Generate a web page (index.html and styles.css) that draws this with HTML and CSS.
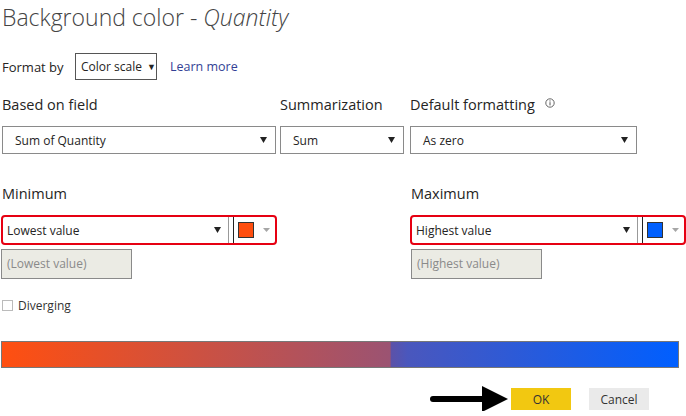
FILE: index.html
```html
<!DOCTYPE html>
<html lang="en">
  <head>
    <meta charset="UTF-8" />
    <title>Background color - Quantity</title>
    <link rel="stylesheet" href="styles.css">
  </head>
  <body>
    <h1 class="title">Background color - <em>Quantity</em></h1>

    <div class="format-row">
      <span class="format-label">Format by</span>
      <span class="mini-select">Color scale <span class="caret">&#9660;</span></span>
      <a href="#" class="learn-more">Learn more</a>
    </div>

    <div class="fields">
      <div class="field col-a">
        <div class="label">Based on field</div>
        <div class="select">
          <span>Sum of Quantity</span>
          <svg class="arrow" width="7" height="6" viewBox="0 0 7 6"><path d="M0 0h7L3.5 6z" fill="#222"/></svg>
        </div>
      </div>
      <div class="field col-b">
        <div class="label">Summarization</div>
        <div class="select">
          <span>Sum</span>
          <svg class="arrow" width="7" height="6" viewBox="0 0 7 6"><path d="M0 0h7L3.5 6z" fill="#222"/></svg>
        </div>
      </div>
      <div class="field col-c">
        <div class="label">Default formatting
          <svg class="info" width="10" height="10" viewBox="0 0 10 10">
            <circle cx="5" cy="5" r="4.2" fill="none" stroke="#555" stroke-width="0.9"/>
            <path d="M5 4.2v3.2" stroke="#555" stroke-width="1"/>
            <circle cx="5" cy="2.9" r="0.6" fill="#555"/>
          </svg>
        </div>
        <div class="select">
          <span>As zero</span>
          <svg class="arrow" width="7" height="6" viewBox="0 0 7 6"><path d="M0 0h7L3.5 6z" fill="#222"/></svg>
        </div>
      </div>
    </div>

    <div class="range">
      <div class="range-col min-col">
        <div class="label">Minimum</div>
        <div class="picker">
          <div class="picker-select">
            <span>Lowest value</span>
            <svg class="arrow" width="7" height="6" viewBox="0 0 7 6"><path d="M0 0h7L3.5 6z" fill="#222"/></svg>
          </div>
          <div class="picker-color">
            <span class="swatch swatch-min"></span>
            <svg width="7" height="4" viewBox="0 0 7 4"><path d="M0 0h7L3.5 4z" fill="#a6a6a6"/></svg>
          </div>
        </div>
        <div class="value-box">(Lowest value)</div>
      </div>
      <div class="range-col max-col">
        <div class="label">Maximum</div>
        <div class="picker">
          <div class="picker-select">
            <span>Highest value</span>
            <svg class="arrow" width="7" height="6" viewBox="0 0 7 6"><path d="M0 0h7L3.5 6z" fill="#222"/></svg>
          </div>
          <div class="picker-color">
            <span class="swatch swatch-max"></span>
            <svg width="7" height="4" viewBox="0 0 7 4"><path d="M0 0h7L3.5 4z" fill="#a6a6a6"/></svg>
          </div>
        </div>
        <div class="value-box">(Highest value)</div>
      </div>
    </div>

    <label class="diverging"><span class="checkbox"></span>Diverging</label>

    <div class="scale-bar"></div>

    <div class="actions">
      <svg class="pointer" width="82" height="26" viewBox="0 0 82 26">
        <path d="M5 13H58" stroke="#000" stroke-width="6" stroke-linecap="round"/>
        <path d="M54 0L80 13L54 26z" fill="#000"/>
      </svg>
      <button class="btn btn-ok">OK</button>
      <button class="btn btn-cancel">Cancel</button>
    </div>
  </body>
</html>
```

FILE: styles.css
```css
body {
  margin: 0;
  width: 686px;
  font-family: "Open Sans", "Noto Sans", sans-serif;
  color: #252423;
  background: #fff;
}
.title {
  margin: 0;
  padding: 2px 0 0 2px;
  height: 36px;
  font-size: 23px;
  font-weight: 300;
  line-height: 30px;
  color: #444;
}
.title em {
  font-style: italic;
}
.format-row {
  display: flex;
  align-items: center;
  height: 27px;
  margin-top: 15px;
  padding-left: 2px;
  font-size: 13px;
}
.format-label {
  width: 73px;
}
.mini-select {
  display: flex;
  align-items: center;
  box-sizing: border-box;
  width: 82px;
  height: 27px;
  padding-left: 5px;
  border: 1px solid #555;
  font-size: 12px;
}
.caret {
  font-size: 9px;
  margin-left: 5px;
}
.learn-more {
  margin-left: 13px;
  color: #333f95;
  text-decoration: none;
  font-size: 12.5px;
}
.label {
  font-size: 14.5px;
  height: 22px;
  line-height: 22px;
  white-space: nowrap;
}
.fields {
  display: flex;
  margin-top: 14px;
}
.col-a {
  width: 278px;
  padding-left: 2px;
}
.col-b {
  width: 130px;
}
.col-c {
  width: 227px;
}
.field .select {
  margin-top: 10px;
}
.col-a .select {
  width: 274px;
}
.col-b .select {
  width: 124px;
}
.col-c .select {
  width: 227px;
}
.select {
  display: flex;
  align-items: center;
  justify-content: space-between;
  box-sizing: border-box;
  height: 28px;
  padding: 0 8px 0 12px;
  border: 1px solid #8a8a8a;
  font-size: 12px;
  background: #fff;
}
.info {
  margin-left: 6px;
  vertical-align: 2px;
}
.range {
  display: flex;
  margin-top: 29px;
}
.range-col {
  display: flex;
  flex-direction: column;
}
.min-col {
  width: 409px;
  padding-left: 1px;
}
.max-col {
  width: 276px;
}
.range-col .label {
  padding-left: 1px;
}
.picker {
  display: flex;
  align-items: center;
  box-sizing: border-box;
  width: 276px;
  height: 30px;
  margin-top: 10px;
  border: 2px solid #e60012;
  border-radius: 4px;
}
.picker-select {
  display: flex;
  align-items: center;
  justify-content: space-between;
  box-sizing: border-box;
  width: 226px;
  height: 100%;
  padding: 0 7px 0 4px;
  border-right: 1px solid #999;
  font-size: 12px;
}
.picker-color {
  display: flex;
  align-items: center;
  height: 100%;
  margin-left: 4px;
  padding-left: 4px;
  border-left: 1px solid #222;
}
.swatch {
  box-sizing: border-box;
  width: 16px;
  height: 16px;
  border: 1px solid #333;
  margin-right: 9px;
}
.swatch-min {
  background: #ff4e0f;
}
.swatch-max {
  background: #005ffe;
}
.value-box {
  box-sizing: border-box;
  width: 131px;
  height: 30px;
  margin-top: 4px;
  padding-left: 5px;
  line-height: 28px;
  border: 1px solid #8a8a8a;
  background: #ebebe4;
  color: #8a8a8a;
  font-size: 12px;
}
.max-col .value-box {
  margin-left: 1px;
}
.diverging {
  display: flex;
  align-items: center;
  height: 14px;
  margin-top: 19px;
  padding-left: 2px;
  font-size: 12px;
  color: #333;
}
.checkbox {
  box-sizing: border-box;
  width: 11px;
  height: 11px;
  margin-right: 5px;
  border: 1px solid #bbb;
}
.scale-bar {
  box-sizing: border-box;
  width: 678px;
  height: 27px;
  margin: 29px 0 0 1px;
  border: 1px solid #777;
  background: linear-gradient(to right, #ff4f10 0%, #9b5372 57.4%, #5c52a8 57.6%, #4a57bd 60%, #005fff 100%);
}
.actions {
  display: flex;
  align-items: center;
  justify-content: flex-end;
  height: 24px;
  margin-top: 19px;
  padding-right: 37px;
}
.pointer {
  margin-right: 1px;
}
.btn {
  width: 60px;
  height: 22px;
  border: none;
  font-family: inherit;
  font-size: 12px;
  color: #333;
  padding: 0;
}
.btn-ok {
  background: #f2c811;
  margin-right: 18px;
}
.btn-cancel {
  background: #eaeaea;
}
```
